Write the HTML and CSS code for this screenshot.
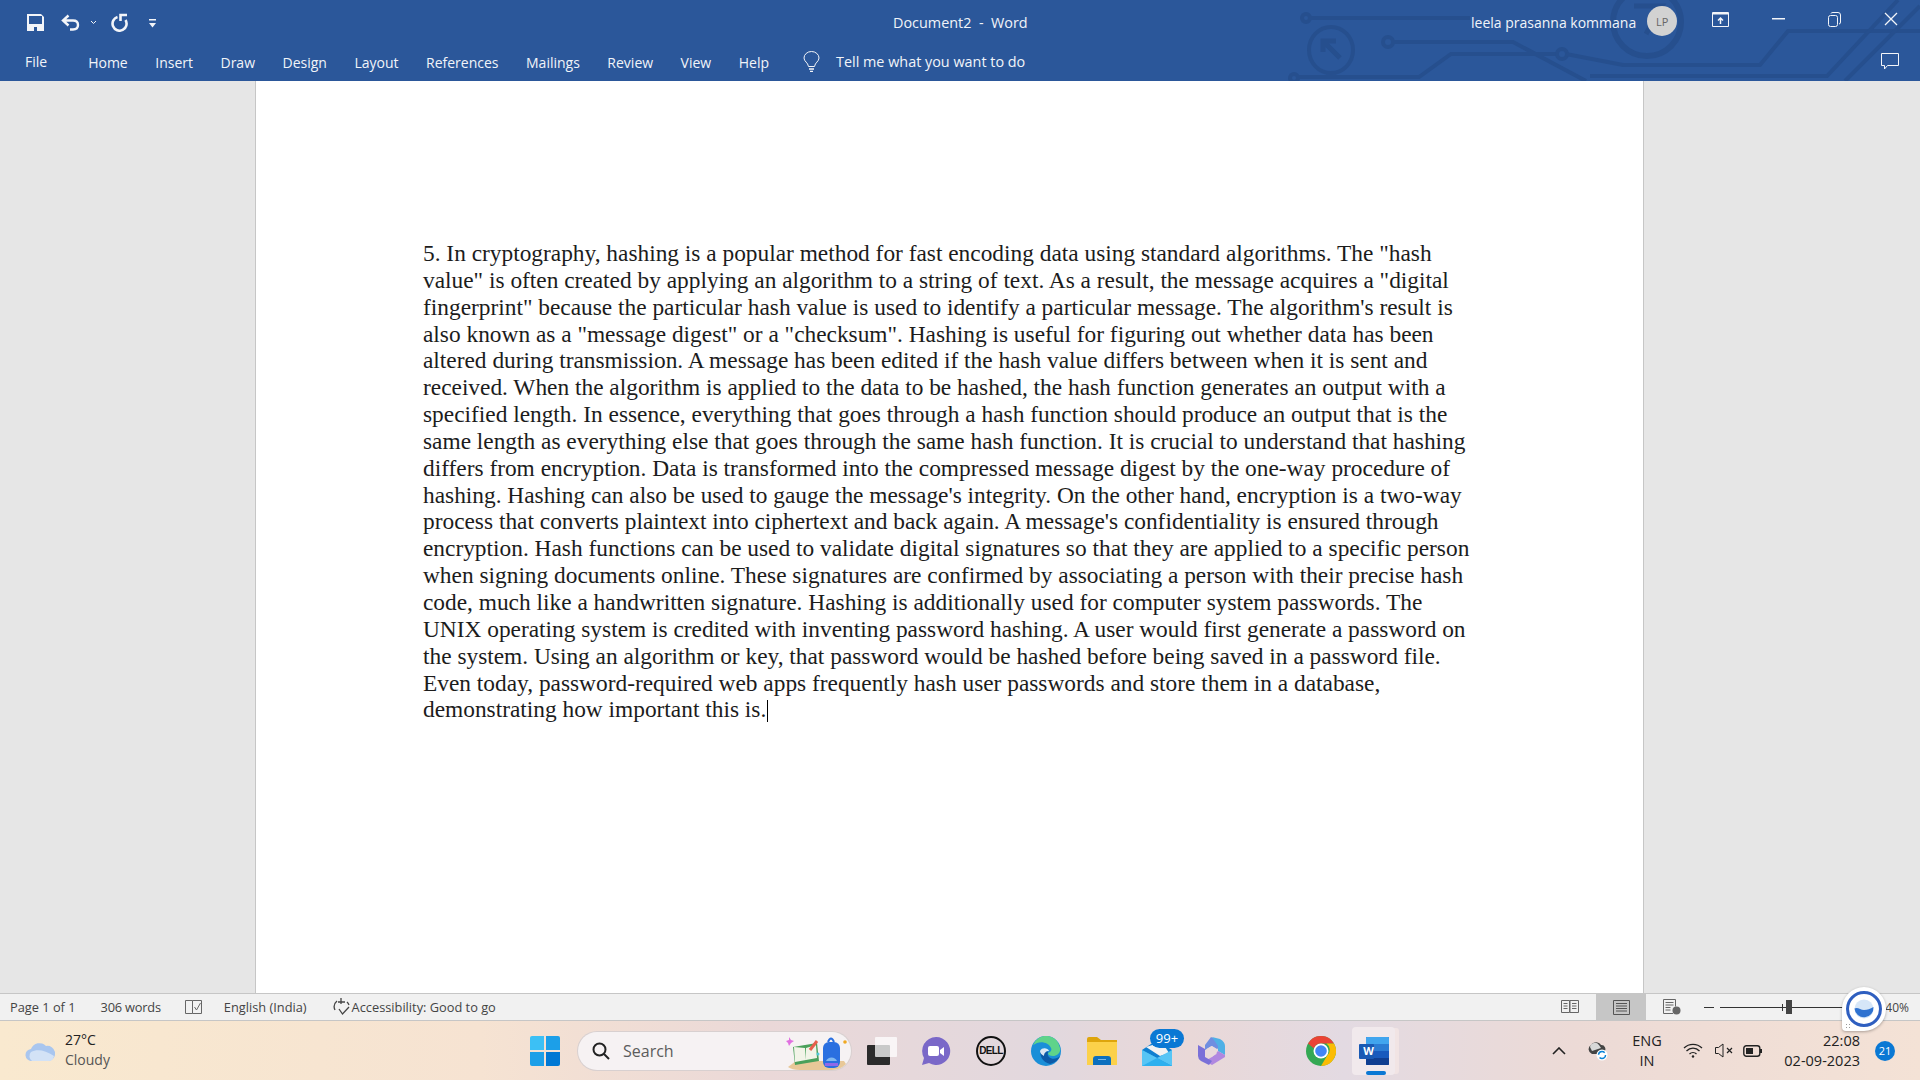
FILE: index.html
```html
<!DOCTYPE html>
<html lang="en">
<head>
    <meta charset="UTF-8">
    <title>Document2 - Word</title>
    <link rel="stylesheet" href="styles.css">
</head>
<body>
<div class="app">

    <header class="ribbon">
        <!-- circuit board artwork behind the title bar -->
        <svg class="circuit" width="660" height="81" viewBox="1260 0 660 81" fill="none" stroke="#264f8e" stroke-width="4">
            <circle cx="1306" cy="18" r="4"/>
            <path d="M1310 18H1470"/>
            <ellipse cx="1331" cy="50" rx="22" ry="23"/>
            <path d="M1340 58L1323 41M1323 52V41H1336" stroke-width="5"/>
            <circle cx="1388" cy="42" r="5"/>
            <path d="M1393 42H1513L1586 81"/>
            <circle cx="1294" cy="78" r="4"/>
            <path d="M1298 77H1419L1451 54H1558"/>
            <circle cx="1562" cy="54" r="5"/>
            <path d="M1566 54L1623 65H1760L1788 31H1920"/>
            <circle cx="1647" cy="22" r="34" stroke-width="6"/>
            <path d="M1634 6H1662L1646 34" stroke-width="5"/>
            <path d="M1590 76H1827L1898 0M1845 81L1920 6"/>
        </svg>

        <div class="title-row">
            <div class="quick-access">
                <svg class="qa-save" width="17" height="17" viewBox="0 0 17 17"><path fill="#f3f5f9" d="M0 0h14l3 3v14H0z"/><path fill="#2b579a" d="M2 2h13v8H2zM7 13h3v4H7z"/></svg>
                <svg class="qa-undo" width="19" height="17" viewBox="0 0 19 17" fill="none" stroke="#f3f5f9" stroke-width="2.400"><path d="M7.500 1.500L2 6.500l5.500 5M2.500 6.500H12c3.500 0 5 2 5 4.500s-1.500 4.500-5 4.500H9"/></svg>
                <svg class="qa-caret" width="7" height="5" viewBox="0 0 7 5" fill="none" stroke="#f3f5f9"><path d="M1 1l2.500 2.500L6 1"/></svg>
                <svg class="qa-redo" width="18" height="19" viewBox="0 0 18 19" fill="none" stroke="#f3f5f9" stroke-width="2.600"><path d="M6.500 4A7 7 0 1 0 14.500 7M16 2H9.500v6"/></svg>
                <svg class="qa-more" width="7" height="9" viewBox="0 0 7 9" fill="#f3f5f9"><path d="M0 0h7v1.500H0zM0 4h7L3.500 8.500z"/></svg>
            </div>
            <div class="doc-title">Document2 &nbsp;-&nbsp; Word</div>
            <div class="account">
                <span class="user-name">leela prasanna kommana</span>
                <span class="avatar">LP</span>
            </div>
            <div class="window-buttons">
                <svg width="17" height="15" viewBox="0 0 17 15" fill="none" stroke="#f3f5f9"><path d="M.5.500h16v14H.500z"/><path d="M1 1.500h15" stroke-width="2"/><path d="M8.500 12V6M6 8.500l2.500-2.500L11 8.500" stroke-width="1.500"/></svg>
                <svg width="13" height="2" viewBox="0 0 13 2"><path fill="#f3f5f9" d="M0 0h13v1.500H0z"/></svg>
                <svg width="13" height="15" viewBox="0 0 13 15" fill="none" stroke="#f3f5f9"><rect x=".5" y="3.500" width="9" height="11" rx="2"/><path d="M3 1.500q0-1 2-1h5q2.500 0 2.500 2.500v7q0 2-1.500 2"/></svg>
                <svg width="14" height="14" viewBox="0 0 14 14" stroke="#f3f5f9" stroke-width="1.300"><path d="M1 1l12 12M13 1L1 13"/></svg>
            </div>
        </div>

        <nav class="tab-row">
            <span class="tab tab-file">File</span>
            <span class="tab">Home</span>
            <span class="tab">Insert</span>
            <span class="tab">Draw</span>
            <span class="tab">Design</span>
            <span class="tab">Layout</span>
            <span class="tab">References</span>
            <span class="tab">Mailings</span>
            <span class="tab">Review</span>
            <span class="tab">View</span>
            <span class="tab">Help</span>
            <svg class="bulb" width="17" height="21" viewBox="0 0 17 21" fill="none" stroke="#f3f5f9"><path d="M5.500 15.500C5 11.500 1 10.500 1 7a7.500 6.500 0 0 1 15 0c0 3.500-4 4.500-4.500 8.500z"/><path d="M6 18h5M7 20.500h3" stroke-width="1.500"/></svg>
            <span class="tell-me">Tell me what you want to do</span>
            <svg class="comment-btn" width="18" height="17" viewBox="0 0 18 17" fill="none" stroke="#f3f5f9"><path d="M.5.500h17v12H6.500l-3 3.500v-3.500h-3z"/></svg>
        </nav>
    </header>

    <main class="workspace">
        <div class="page">
            <p class="doc-text">
                <span class="line">5. In cryptography, hashing is a popular method for fast encoding data using standard algorithms. The "hash</span>
                <span class="line">value" is often created by applying an algorithm to a string of text. As a result, the message acquires a "digital</span>
                <span class="line">fingerprint" because the particular hash value is used to identify a particular message. The algorithm's result is</span>
                <span class="line">also known as a "message digest" or a "checksum". Hashing is useful for figuring out whether data has been</span>
                <span class="line">altered during transmission. A message has been edited if the hash value differs between when it is sent and</span>
                <span class="line">received. When the algorithm is applied to the data to be hashed, the hash function generates an output with a</span>
                <span class="line">specified length. In essence, everything that goes through a hash function should produce an output that is the</span>
                <span class="line">same length as everything else that goes through the same hash function. It is crucial to understand that hashing</span>
                <span class="line">differs from encryption. Data is transformed into the compressed message digest by the one-way procedure of</span>
                <span class="line">hashing. Hashing can also be used to gauge the message's integrity. On the other hand, encryption is a two-way</span>
                <span class="line">process that converts plaintext into ciphertext and back again. A message's confidentiality is ensured through</span>
                <span class="line">encryption. Hash functions can be used to validate digital signatures so that they are applied to a specific person</span>
                <span class="line">when signing documents online. These signatures are confirmed by associating a person with their precise hash</span>
                <span class="line">code, much like a handwritten signature. Hashing is additionally used for computer system passwords. The</span>
                <span class="line">UNIX operating system is credited with inventing password hashing. A user would first generate a password on</span>
                <span class="line">the system. Using an algorithm or key, that password would be hashed before being saved in a password file.</span>
                <span class="line">Even today, password-required web apps frequently hash user passwords and store them in a database,</span>
                <span class="line">demonstrating how important this is.<span class="caret"></span></span>
            </p>
        </div>
    </main>

    <footer class="status-bar">
        <span class="st-page">Page 1 of 1</span>
        <span class="st-words">306 words</span>
        <svg class="st-proof" width="18" height="16" viewBox="0 0 18 16" fill="none" stroke="#666"><path d="M.5 1.500h7v13h-7zM7.500 1.500h9v13h-9"/><path d="M9.500 8l2 3 4-7"/></svg>
        <span class="st-lang">English (India)</span>
        <svg class="st-access" width="20" height="20" viewBox="0 0 20 20" fill="none" stroke="#444" stroke-width="1.300"><path d="M5 4a7.500 7.500 0 0 0-2 9M15 5a7 7 0 0 1 2 3M9 1v6M6 5h7M7 12l3.500 5L17 10" /></svg>
        <span class="st-a11y">Accessibility: Good to go</span>

        <div class="view-buttons">
            <svg width="18" height="16" viewBox="0 0 18 16" fill="none" stroke="#666"><path d="M.5 1.500h8v12h-8zM9 1.500h8.500v12H9zM2.500 4.500h4M2.500 7h4M2.500 9.500h4M11 4.500h4.500M11 7h4.500M11 9.500h4.500"/></svg>
            <span class="view-active"><svg width="17" height="15" viewBox="0 0 17 15" fill="none" stroke="#555"><path d="M.5.500h16v14H.500zM3 3.500h11M3 6h11M3 8.500h11M3 11h11"/></svg></span>
            <svg width="18" height="16" viewBox="0 0 18 16" fill="none" stroke="#666"><path d="M10 14.500H.5V.500h12v7M2.500 3.500h8M2.500 6h8M2.500 8.500h5M2.500 11h5"/><circle cx="13.500" cy="11.500" r="4" fill="#666" stroke="none"/></svg>
        </div>
        <div class="zoom-slider">
            <span class="zoom-minus"></span>
            <span class="zoom-track"><span class="zoom-tick"></span><span class="zoom-thumb"></span></span>
        </div>
        <span class="zoom-pct">40%</span>
    </footer>

    <div class="taskbar">
        <div class="weather">
            <svg width="30" height="20" viewBox="0 0 30 20"><path fill="#a9c6ef" d="M7 20a6 6 0 0 1-1-12 9 9 0 0 1 15-3 7 7 0 0 1 3 15z"/><path fill="#d3e2f6" d="M7 20a6 6 0 0 1-1-9c6-3 14-2 23 4q-1 5-5 5z"/></svg>
            <div class="weather-text">
                <span class="temp">27°C</span>
                <span class="cond">Cloudy</span>
            </div>
        </div>

        <svg class="win-logo" width="30" height="30" viewBox="0 0 30 30">
            <path fill="#3cc0f5" d="M0 2q0-2 2-2h12v14H0z"/><path fill="#1c9fe8" d="M16 0h12q2 0 2 2v12H16z"/>
            <path fill="#1c9fe8" d="M0 16h14v14H2q-2 0-2-2z"/><path fill="#0078d4" d="M16 16h14v12q0 2-2 2H16z"/>
        </svg>

        <div class="search-box">
            <svg width="18" height="18" viewBox="0 0 18 18" fill="none" stroke="#222" stroke-width="2"><circle cx="7.500" cy="7.500" r="6"/><path d="M12 12l5 5"/></svg>
            <span class="search-label">Search</span>
            <svg class="search-art" width="62" height="36" viewBox="0 0 62 36">
                <path fill="#e8c898" d="M2 33l8-6h48l4 6q-5 3-12 3H14q-8 0-12-3z"/>
                <path fill="#4aa05a" d="M7 13l24-4 2 18-24 4z"/><path fill="#f2f4e8" d="M8 13l11 1 1 12-11 2zM20 14l10-3 1 13-11 2z"/>
                <path stroke="#e8604c" stroke-width="3" d="M24 16l7-9"/>
                <path fill="#e070e0" d="M3 3l2 3 3 1-3 2-2 3-1-3-2-2 3-1z"/><circle cx="32" cy="20" r="1.500" fill="#50c8d8"/>
                <rect x="37" y="8" width="17" height="26" rx="6" fill="#2a6fe0"/><path fill="#80b8f0" d="M40 27a6 6 0 0 1 11 0z"/><path fill="#9068e8" d="M39 29h13v3H39z"/><path fill="none" stroke="#2a6fe0" stroke-width="2" d="M42 8q3-7 6 0"/>
                <circle cx="59" cy="8" r="1.800" fill="#f0a820"/>
            </svg>
        </div>

        <div class="task-icons">
            <svg class="ti-view" width="30" height="28" viewBox="0 0 30 28"><rect y="8" width="23" height="20" rx="1" fill="#2b2b2b"/><rect x="8" width="22" height="20" rx="1" fill="#fff" fill-opacity=".75"/></svg>
            <svg class="ti-meet" width="30" height="30" viewBox="0 0 30 30"><path fill="#7a68c8" d="M15 1a14 14 0 1 1-7 26l-7 2 2-7A14 14 0 0 1 15 1z"/><rect x="7" y="10" width="11" height="10" rx="2" fill="#fff"/><path fill="#fff" d="M19 14l4-3v9l-4-3z"/></svg>
            <div class="ti-dell"><span>DELL</span></div>
            <svg class="ti-edge" width="30" height="30" viewBox="0 0 30 30"><circle cx="15" cy="15" r="15" fill="#1a8fd8"/><path fill="#5fd38a" d="M2 9a14 14 0 0 1 27 3c1 5-3 8-7 8-3 0-5-1-5-3 3-1 4-3 3-5-2-5-9-7-14-5z"/><path fill="#0c5aa8" d="M10 14c-2 5 1 12 9 14 4-1 8-3 10-8-3 3-8 4-11 1-2-2-1-4-1-5-2-3-6-4-7-2z"/><path fill="#fff" fill-opacity=".85" d="M9 15c2-4 8-3 9 0-3 0-5 2-5 5-2-1-4-3-4-5z"/></svg>
            <svg class="ti-folder" width="30" height="28" viewBox="0 0 30 28"><path fill="#dea50c" d="M0 2q0-2 2-2h8l4 3h16v6H0z"/><path fill="#fcd14a" d="M0 5h30v23H0z"/><path fill="#0c6fbe" d="M6 22q0-3 3-3h12q3 0 3 3v6H6z"/><path fill="#7ab8e8" d="M11 22h8v1h-8z"/></svg>
            <div class="ti-mail">
                <svg width="30" height="26" viewBox="0 0 30 26"><path fill="#0f7fd0" d="M0 10L15 0l15 10v16H0z"/><path fill="#f2f2f2" d="M4 7l16-5 7 11-9 3z"/><path fill="#2db0ef" d="M0 10l15 8 15 8H0z"/><path fill="#57c5f5" d="M0 10l15 8L0 26zM15 18l15-8v16z"/></svg>
                <span class="mail-badge">99+</span>
            </div>
            <svg class="ti-copilot" width="27" height="28" viewBox="0 0 27 28"><path fill="#6f8ee0" d="M13 0l13 7-7 5-5-3-7 4V8z"/><path fill="#4fb0e6" d="M14 0l8 2q5 3 5 7v9l-7-4V9z"/><path fill="#b088e0" d="M20 14l7 4v2l-13 8-7-4 7-4z"/><path fill="#7a70d8" d="M0 8l7 4v8l7 4-3 4-8-4q-3-2-3-5z"/><path fill="#e8dadc" d="M13.500 9l5 3v5l-5 3-5-3v-5z"/></svg>
            <svg class="ti-chrome" width="30" height="30" viewBox="0 0 30 30"><circle cx="15" cy="15" r="15" fill="#34a853"/><path fill="#ea4335" d="M2 7.500A15 15 0 0 1 28 7.500H15a7.500 7.500 0 0 0-7 5z"/><path fill="#fbbc04" d="M28 7.500A15 15 0 0 1 15 30l6.500-11a7.500 7.500 0 0 0-1-11.500z"/><circle cx="15" cy="15" r="7.500" fill="#fff"/><circle cx="15" cy="15" r="5.800" fill="#4285f4"/></svg>
            <div class="ti-word">
                <svg width="30" height="28" viewBox="0 0 30 28"><rect x="7" width="23" height="28" rx="1" fill="#185abd"/><path fill="#41a5ee" d="M8 0h21q1 0 1 1v6H7V1q0-1 1-1z"/><path fill="#2b7cd3" d="M7 7h23v7H7z"/><path fill="#103f91" d="M7 21h23v6q0 1-1 1H8q-1 0-1-1z"/><rect y="7" width="15" height="15" rx="1" fill="#1a5ab4"/></svg>
                <span class="word-letter">W</span>
                <span class="word-bar"></span>
            </div>
        </div>

        <div class="tray">
            <svg class="tray-up" width="14" height="8" viewBox="0 0 14 8" fill="none" stroke="#222" stroke-width="1.600"><path d="M1 7l6-6 6 6"/></svg>
            <svg class="tray-cloud" width="21" height="20" viewBox="0 0 21 20"><path fill="#444" d="M5 13a5 5 0 0 1-1-9 6 6 0 0 1 10 0 4 4 0 0 1 3 7l-4 2z"/><path fill="#d8d8d8" d="M3 6a5 5 0 0 1 9-2l2 3-9 3z"/><circle cx="15" cy="14" r="5.500" fill="#fff"/><circle cx="15" cy="14" r="3.500" fill="none" stroke="#0a84d8" stroke-width="1.500" stroke-dasharray="8 3"/></svg>
            <div class="tray-lang"><span>ENG</span><span>IN</span></div>
            <svg class="tray-wifi" width="20" height="15" viewBox="0 0 20 15" fill="none" stroke="#222" stroke-width="1.300"><path d="M1 5a13 13 0 0 1 18 0M3.500 8a9 9 0 0 1 13 0M6.500 11a5 5 0 0 1 7 0"/><circle cx="10" cy="13.500" r="1.200" fill="#222" stroke="none"/></svg>
            <svg class="tray-mute" width="19" height="15" viewBox="0 0 19 15" fill="none" stroke="#222"><path d="M.5 4.500h3L8 1v13L3.500 10.500h-3z"/><path d="M12 5l5 5M17 5l-5 5" stroke-width="1.200"/></svg>
            <svg class="tray-batt" width="20" height="12" viewBox="0 0 20 12" fill="none" stroke="#222"><rect x=".8" y=".8" width="16" height="10.400" rx="2.500" stroke-width="1.400"/><rect x="3" y="3" width="7" height="6" fill="#222" stroke="none"/><path d="M18 4v4" stroke-width="2"/></svg>
            <div class="tray-clock"><span>22:08</span><span>02-09-2023</span></div>
            <span class="tray-badge">21</span>
        </div>
    </div>

    <!-- floating screen recorder widget, sits over status bar and taskbar -->
    <div class="float-widget">
        <svg width="38" height="38" viewBox="0 0 38 38"><circle cx="19" cy="19" r="16.500" fill="#fff" stroke="#2f5fc0" stroke-width="3"/><circle cx="19" cy="19" r="9.500" fill="#d6e6f8"/><path fill="#2f72d0" d="M9.500 18.500c3-2 6 1.500 9.500 1.500s6-1 9.500-3a9.500 9.500 0 0 1-19 1.500z"/></svg>
        <span class="float-grip"></span>
    </div>
</div>
</body>
</html>
```

FILE: styles.css
```css
html, body {
    margin: 0;
    height: 100%;
    overflow: hidden;
}
body {
    font-family: "Open Sans", "Noto Sans", sans-serif;
    color: #333;
}
svg {
    display: block;
    flex: none;
}
.app {
    position: relative;
    display: flex;
    flex-direction: column;
    height: 1080px;
}

/* ribbon */
.ribbon {
    position: relative;
    height: 81px;
    flex: none;
    background: #2b579a;
    color: #f1f4f9;
    overflow: hidden;
}
.circuit {
    position: absolute;
    top: 0;
    right: 0;
}
.title-row {
    position: relative;
    display: flex;
    align-items: center;
    height: 44px;
}
.quick-access {
    display: flex;
    align-items: center;
    width: 387px;
    padding-left: 27px;
}
.qa-undo { margin-left: 17px; }
.qa-caret { margin-left: 10px; }
.qa-redo { margin-left: 14px; }
.qa-more { margin-left: 20px; margin-top: 2px; }
.doc-title {
    width: 150px;
    margin-left: 479px;
    font-size: 14.4px;
    white-space: nowrap;
}
.account {
    display: flex;
    align-items: center;
    margin-left: 428px;
}
.user-name {
    font-size: 14px;
    white-space: nowrap;
}
.avatar {
    display: flex;
    align-items: center;
    justify-content: center;
    width: 30px;
    height: 30px;
    margin-left: 11px;
    margin-top: -2px;
    border-radius: 50%;
    background: #d2d2d2;
    color: #666;
    font-size: 11px;
}
.window-buttons {
    display: flex;
    align-items: center;
    margin-left: auto;
    margin-top: -6px;
    padding-right: 22px;
    gap: 43px;
}
.tab-row {
    position: relative;
    display: flex;
    align-items: center;
    height: 37px;
    padding-left: 25px;
    font-size: 14px;
}
.tab { margin-right: 27.5px; white-space: nowrap; }
.tab-file { margin-right: 41px; margin-top: -2px; }
.bulb { margin-left: 6.5px; margin-top: -2px; }
.tell-me { margin-left: 16px; font-size: 14.4px; white-space: nowrap; margin-top: -2px; }
.comment-btn { margin-left: auto; margin-right: 21px; margin-top: -2px; }

/* document */
.workspace {
    flex: 1;
    display: flex;
    min-height: 0;
    background: #e6e6e6;
}
.page {
    width: 1389px;
    margin-left: 255px;
    box-sizing: border-box;
    background: #fff;
    border-left: 1px solid #c6c6c6;
    border-right: 1px solid #c6c6c6;
    padding: 159px 0 0 167px;
}
.doc-text {
    margin: 0;
    font-family: "Liberation Serif", "Times New Roman", serif;
    font-size: 23.37px;
    line-height: 26.85px;
    color: #1c1c1c;
}
.line {
    display: block;
    white-space: nowrap;
}
.caret {
    display: inline-block;
    width: 1px;
    height: 22px;
    margin-left: 1px;
    background: #000;
    vertical-align: -5px;
}

/* status bar */
.status-bar {
    display: flex;
    align-items: center;
    flex: none;
    height: 28px;
    box-sizing: border-box;
    border-top: 1px solid #c6c6c6;
    border-bottom: 1px solid #c6c6c6;
    background: #f1f1f1;
    padding-left: 10px;
    font-size: 12.8px;
    color: #444;
    white-space: nowrap;
}
.st-words { margin-left: 25px; letter-spacing: -.2px; }
.st-proof { margin-left: 24px; }
.st-lang { margin-left: 21px; }
.st-access { margin-left: 25px; }
.view-buttons {
    display: flex;
    align-items: center;
    margin-left: auto;
    height: 100%;
}
.view-active {
    display: flex;
    align-items: center;
    justify-content: center;
    width: 50px;
    height: 100%;
    margin: 0 17px;
    background: #c6c6c6;
}
.zoom-slider {
    display: flex;
    align-items: center;
    margin-left: 23px;
}
.zoom-minus {
    width: 10px;
    height: 1px;
    background: #333;
}
.zoom-track {
    position: relative;
    width: 129px;
    height: 1px;
    margin-left: 6px;
    background: #333;
}
.zoom-tick {
    position: absolute;
    left: 62px;
    top: -3px;
    width: 1px;
    height: 7px;
    background: #333;
}
.zoom-thumb {
    position: absolute;
    left: 66px;
    top: -7px;
    width: 6px;
    height: 14px;
    background: #444;
}
.zoom-pct {
    margin-left: 36px;
    margin-right: 11px;
    font-size: 12px;
}

/* taskbar */
.taskbar {
    display: flex;
    align-items: center;
    flex: none;
    height: 59px;
    background: linear-gradient(90deg, #f9e9cf 0%, #f6e3d2 25%, #ead8d8 40%, #e2d8de 55%, #e9d8d8 62%, #e3dae2 70%, #ecdad6 82%, #f4e2d6 100%);
    color: #222;
}
.weather {
    display: flex;
    align-items: center;
    width: 505px;
    padding-left: 25px;
}
.weather-text {
    display: flex;
    flex-direction: column;
    margin-left: 10px;
    margin-top: -2px;
    font-size: 14px;
    line-height: 20px;
}
.cond { color: #555; }
.search-box {
    display: flex;
    align-items: center;
    width: 273px;
    height: 38px;
    margin-left: 18px;
    box-sizing: border-box;
    padding-left: 14px;
    border-radius: 19px;
    background: #f6f2f3;
    box-shadow: 0 0 0 1px #d8d0d0;
    overflow: hidden;
}
.search-label {
    margin-left: 13px;
    font-size: 16px;
    color: #5c5c5c;
}
.search-art { margin-left: 112px; margin-top: 2px; }
.task-icons {
    display: flex;
    align-items: center;
}
.ti-view { margin-left: 16px; }
.ti-meet { margin-left: 24px; }
.ti-dell {
    display: flex;
    align-items: center;
    justify-content: center;
    width: 26px;
    height: 26px;
    margin-left: 25px;
    border: 2px solid #111;
    border-radius: 50%;
    font-family: "Liberation Sans", sans-serif;
    font-size: 10px;
    font-weight: bold;
    letter-spacing: -.6px;
    color: #111;
}
.ti-edge { margin-left: 25px; }
.ti-folder { margin-left: 26px; }
.ti-mail {
    position: relative;
    margin-left: 25px;
    margin-top: 4px;
}
.mail-badge {
    position: absolute;
    left: 8px;
    top: -11px;
    width: 34px;
    height: 19px;
    border-radius: 10px;
    background: #0a78d4;
    color: #fff;
    font-size: 13px;
    line-height: 19px;
    text-align: center;
}
.ti-copilot { margin-left: 26px; }
.ti-chrome { margin-left: 81px; }
.ti-word {
    position: relative;
    display: flex;
    align-items: center;
    justify-content: center;
    width: 43px;
    height: 48px;
    margin-left: 16px;
    border-radius: 4px;
    background: #f1e9ec;
    box-shadow: 5px 0 0 -1px #f1e4e4;
}
.word-letter {
    position: absolute;
    left: 9px;
    top: 16px;
    width: 15px;
    color: #fff;
    font-size: 11px;
    font-weight: bold;
    line-height: 15px;
    text-align: center;
}
.word-bar {
    position: absolute;
    left: 14px;
    bottom: 0;
    width: 20px;
    height: 4px;
    border-radius: 2px;
    background: #0a78d4;
}
.tray {
    display: flex;
    align-items: center;
    margin-left: auto;
    padding-right: 25px;
    font-size: 14.5px;
    color: #222;
}
.tray-cloud { margin-left: 21px; }
.tray-lang {
    display: flex;
    flex-direction: column;
    align-items: center;
    width: 30px;
    margin-left: 24px;
    line-height: 20px;
}
.tray-wifi { margin-left: 21px; }
.tray-mute { margin-left: 12px; }
.tray-batt { margin-left: 9px; }
.tray-clock {
    display: flex;
    flex-direction: column;
    align-items: flex-end;
    width: 80px;
    margin-left: 17px;
    line-height: 20px;
}
.tray-badge {
    width: 20px;
    height: 20px;
    margin-left: 15px;
    border-radius: 50%;
    background: #0a78d4;
    color: #fff;
    font-size: 11px;
    line-height: 20px;
    text-align: center;
}

.float-widget {
    position: absolute;
    left: 1842px;
    top: 987px;
    display: flex;
    align-items: center;
    justify-content: center;
    width: 44px;
    height: 44px;
    border-radius: 50% 50% 50% 4px;
    background: #fff;
    box-shadow: 0 1px 3px rgba(0,0,0,.3);
}
.float-grip {
    position: absolute;
    left: 3px;
    bottom: 1px;
    width: 5px;
    height: 7px;
    background: radial-gradient(circle, #999 0 1px, transparent 1px) 0 0 / 3px 3px;
}
```
